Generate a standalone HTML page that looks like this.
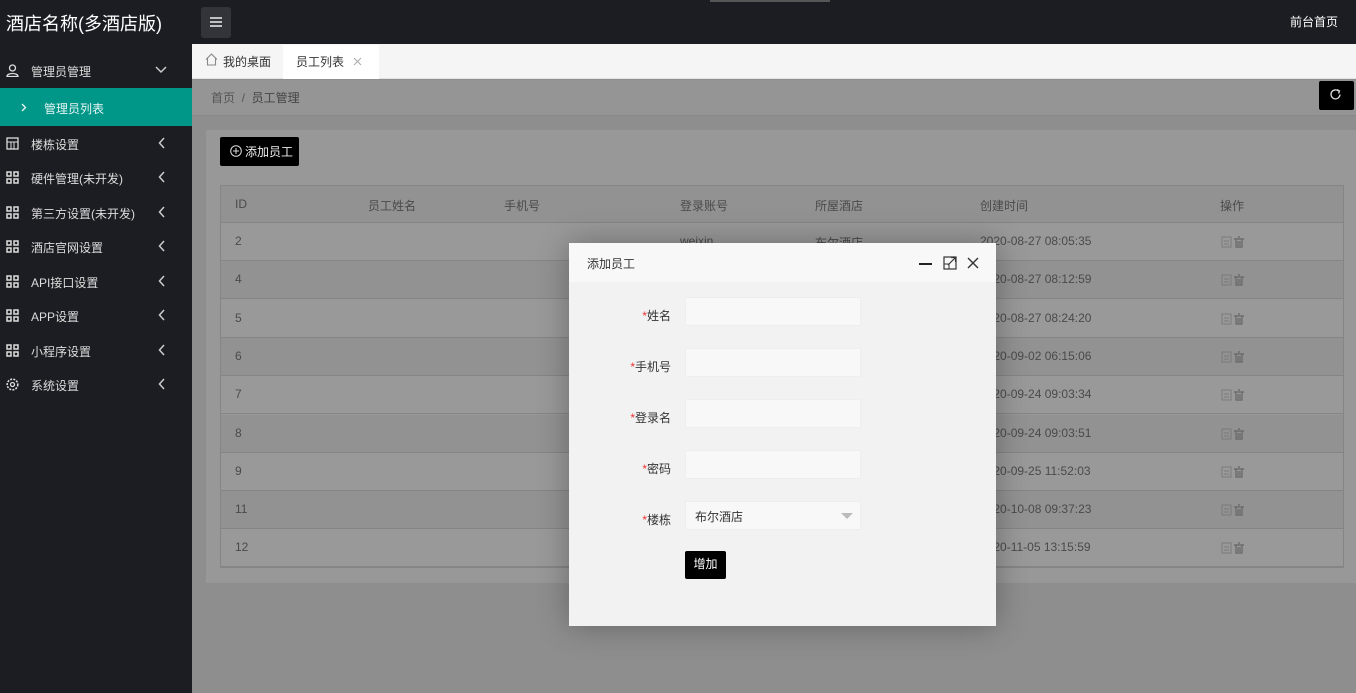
<!DOCTYPE html><html><head><meta charset="utf-8"><style>
*{margin:0;padding:0;box-sizing:border-box}
body{width:1356px;height:693px;overflow:hidden;position:relative;font-family:"Liberation Sans","Noto Sans CJK SC",sans-serif;font-size:12px;background:#8e8e8e;color:#333}
.a{position:absolute}
.side{left:0;top:0;width:192px;height:693px;background:#1c1d22}
.hdr{left:192px;top:0;width:1164px;height:44px;background:#1c1d22}
.mi{position:absolute;left:0;width:192px;color:#ddd;font-size:12px}
.mi .t{position:absolute;left:31px}
.mi .ar{position:absolute;left:158px;top:1px}
.ic{position:absolute;left:6px;top:1px;width:13px;height:13px}
.tr{position:absolute;left:221px;width:1122px;height:38px;border-bottom:1px solid #858585}
.tr span{position:absolute;top:11px;color:#4a4a4a}
.lbl{position:absolute;right:325px;color:#333;font-size:12px}
.lbl b{color:#e33;font-weight:normal}
.inp{position:absolute;left:116px;width:176px;height:29px;background:#f8f8f8;border:1px solid #eee}
</style></head><body>
<div class="a side"></div>
<div class="a hdr"></div>
<div class="a" style="left:6px;top:10px;color:#fff;font-size:18px">酒店名称(多酒店版)</div>
<div class="a" style="left:201px;top:7px;width:30px;height:31px;background:#33343a;border-radius:3px"></div>
<svg class="a" style="left:209px;top:16px" width="14" height="12"><path d="M1 2h12M1 6h12M1 10h12" stroke="#eee" stroke-width="1.5"/></svg>
<div class="a" style="left:1290px;top:13px;color:#fff;font-size:12px">前台首页</div>
<div class="a" style="left:710px;top:0;width:120px;height:2px;background:#555"></div>

<div class="mi" style="top:63px"><svg class="ic" viewBox="0 0 13 13"><circle cx="6.5" cy="4" r="3" fill="none" stroke="#ddd" stroke-width="1.3"/><path d="M1 12.5c0-4 11-4 11 0z" fill="none" stroke="#ddd" stroke-width="1.3"/></svg><span class="t">管理员管理</span><svg class="a" style="left:155px;top:3px" width="12" height="8"><path d="M1 1l5 5 5-5" stroke="#ccc" fill="none" stroke-width="1.5"/></svg></div>
<div class="a" style="left:0;top:88px;width:192px;height:38px;background:#009688"></div>
<svg class="a" style="left:21px;top:103px" width="6" height="9"><path d="M1 1l3.5 3.5L1 8" stroke="#e8f5f4" fill="none" stroke-width="1.3"/></svg>
<div class="a" style="left:44px;top:100px;color:#e8f5f4">管理员列表</div>
<div id="menu"></div>
<script>
var it=[["楼栋设置",137,1],["硬件管理(未开发)",171],["第三方设置(未开发)",206],["酒店官网设置",240],["API接口设置",275],["APP设置",309],["小程序设置",344],["系统设置",378,2]];
var grid='<path d="M1 1h4v4H1zM8 1h4v4H8zM1 8h4v4H1zM8 8h4v4H8z" fill="none" stroke="#ddd" stroke-width="1.5"/>';
var m="";it.forEach(function(x){var ic=x[2]==1?'<rect x="1" y="1" width="11" height="11" fill="none" stroke="#ddd" stroke-width="1.3"/><path d="M1 5h11M5 5v7M8 5v7" stroke="#ddd"/>':x[2]==2?'<circle cx="6.5" cy="6.5" r="2" fill="none" stroke="#ddd" stroke-width="1.3"/><circle cx="6.5" cy="6.5" r="5.3" fill="none" stroke="#ddd" stroke-width="1.6" stroke-dasharray="2 1.2"/>':grid;
m+='<div class="mi" style="top:'+(x[1]-1)+'px"><svg class="ic" viewBox="0 0 13 13">'+ic+'</svg><span class="t">'+x[0]+'</span><svg class="ar" width="7" height="12"><path d="M6 1L1.5 6 6 11" stroke="#ccc" fill="none" stroke-width="1.5"/></svg></div>'});
document.getElementById('menu').innerHTML=m;
</script>

<div class="a" style="left:192px;top:44px;width:1164px;height:35px;background:#f5f5f5;border-bottom:1px solid #e2e2e2"></div>
<div class="a" style="left:283px;top:45px;width:96px;height:34px;background:#fff"></div>
<svg class="a" style="left:205px;top:53px" width="13" height="13"><path d="M1 6.5L6.5 1 12 6.5M2.5 5.5V12h8V5.5" fill="none" stroke="#888" stroke-width="1.1"/></svg>
<div class="a" style="left:223px;top:53px;color:#333">我的桌面</div>
<div class="a" style="left:296px;top:53px;color:#333">员工列表</div>
<svg class="a" style="left:353px;top:57px" width="9" height="9"><path d="M1 1l7 7M8 1L1 8" stroke="#aaa" stroke-width="1"/></svg>

<div class="a" style="left:192px;top:80px;width:1164px;height:36px;background:#959595;border-bottom:1px solid #888"></div>
<div class="a" style="left:211px;top:89px;color:#555">首页 &nbsp;/ &nbsp;<span style="color:#444">员工管理</span></div>
<div class="a" style="left:1319px;top:81px;width:35px;height:29px;background:#000;border-radius:2px"></div>
<svg class="a" style="left:1329px;top:88px" width="13" height="13"><path d="M11 6.5A4.5 4.5 0 1 1 9.5 3" fill="none" stroke="#ddd" stroke-width="1.3"/><path d="M8 1.5l2.5 1.5-1 2.5" fill="none" stroke="#ddd" stroke-width="1.3"/></svg>
<div class="a" style="left:206px;top:130px;width:1150px;height:453px;background:#989898"></div>
<div class="a" style="left:220px;top:137px;width:79px;height:29px;background:#000;border-radius:2px"></div>
<svg class="a" style="left:230px;top:145px" width="12" height="12"><circle cx="6" cy="6" r="5.3" fill="none" stroke="#ddd"/><path d="M6 3v6M3 6h6" stroke="#ddd"/></svg>
<div class="a" style="left:245px;top:143px;color:#eee;font-size:12px">添加员工</div>

<div class="a" style="left:220px;top:185px;width:1124px;height:383px;border:1px solid #858585"></div>
<div class="tr" style="top:186px;height:37px;background:#929292"><span style="left:14px">ID</span><span style="left:147px">员工姓名</span><span style="left:283px">手机号</span><span style="left:459px">登录账号</span><span style="left:594px">所屋酒店</span><span style="left:759px">创建时间</span><span style="left:999px">操作</span></div>
<div id="rows"></div>
<script>
var d=[["2","weixin","布尔酒店","2020-08-27 08:05:35"],["4","","","2020-08-27 08:12:59"],["5","","","2020-08-27 08:24:20"],["6","","","2020-09-02 06:15:06"],["7","","","2020-09-24 09:03:34"],["8","","","2020-09-24 09:03:51"],["9","","","2020-09-25 11:52:03"],["11","","","2020-10-08 09:37:23"],["12","","","2020-11-05 13:15:59"]];
var h="";d.forEach(function(r,i){h+='<div class="tr" style="top:'+(223+i*38.3)+'px;background:'+(i%2?'#929292':'#999')+'"><span style="left:14px">'+r[0]+'</span><span style="left:459px">'+r[1]+'</span><span style="left:594px">'+r[2]+'</span><span style="left:759px">'+r[3]+'</span><svg style="position:absolute;left:1000px;top:13px" width="24" height="12"><rect x="1" y="1" width="9" height="10" fill="none" stroke="#7a7a7a"/><path d="M3 5h5M3 8h5" stroke="#7a7a7a"/><path d="M13 3h10M15 3v8h6V3M17 1h2M17 5v5M19 5v5" fill="none" stroke="#666" stroke-width="1.2"/></svg></div>'});
document.getElementById('rows').innerHTML=h;
</script>

<div class="a" style="left:569px;top:243px;width:427px;height:383px;background:#f2f2f2;box-shadow:0 0 30px rgba(0,0,0,.3)">
<div class="a" style="left:0;top:0;width:427px;height:39px;background:#f8f8f8"></div>
<div class="a" style="left:18px;top:12px;color:#333">添加员工</div>
<div class="a" style="left:350px;top:20px;width:13px;height:2px;background:#222"></div>
<svg class="a" style="left:374px;top:13px" width="14" height="14"><rect x="1" y="1" width="12" height="12" fill="none" stroke="#333" stroke-width="1.2"/><path d="M5 9l7-7M8 1.5h4.5V6" fill="none" stroke="#333" stroke-width="1.2"/><rect x="1" y="8" width="5" height="5" fill="none" stroke="#333"/></svg>
<svg class="a" style="left:398px;top:14px" width="12" height="12"><path d="M1 1l10 10M11 1L1 11" stroke="#333" stroke-width="1.4"/></svg>
<div class="lbl" style="top:64px"><b>*</b>姓名</div><div class="inp" style="top:54px"></div>
<div class="lbl" style="top:115px"><b>*</b>手机号</div><div class="inp" style="top:105px"></div>
<div class="lbl" style="top:166px"><b>*</b>登录名</div><div class="inp" style="top:156px"></div>
<div class="lbl" style="top:217px"><b>*</b>密码</div><div class="inp" style="top:207px"></div>
<div class="lbl" style="top:268px"><b>*</b>楼栋</div><div class="inp" style="top:258px"><span class="a" style="left:9px;top:6px;color:#333">布尔酒店</span><span class="a" style="left:155px;top:11px;width:0;height:0;border-left:6px solid transparent;border-right:6px solid transparent;border-top:6px solid #bbb"></span></div>
<div class="a" style="left:116px;top:308px;width:41px;height:28px;background:#000;border-radius:2px;color:#fff;text-align:center;line-height:27px">增加</div>
</div>
</body></html>
